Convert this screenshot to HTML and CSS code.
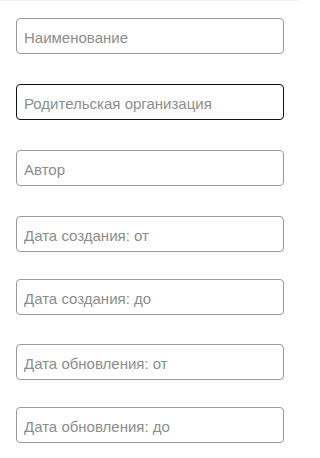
FILE: index.html
```html
<!DOCTYPE html>
<html lang="ru">
<head>
<meta charset="utf-8">
<meta name="viewport" content="width=device-width, initial-scale=1">
<link rel="stylesheet" href="styles.css">
</head>
<body>
<div class="page">
  <div class="topline"></div>
  <form class="filters">
    <input class="field" type="text" placeholder="Наименование">
    <input class="field field--active" type="text" placeholder="Родительская организация">
    <input class="field" type="text" placeholder="Автор">
    <input class="field" type="text" placeholder="Дата создания: от">
    <input class="field field--to" type="text" placeholder="Дата создания: до">
    <input class="field field--from" type="text" placeholder="Дата обновления: от">
    <input class="field field--to" type="text" placeholder="Дата обновления: до">
  </form>
</div>
</body>
</html>
```

FILE: styles.css
```css
html, body {
  margin: 0;
  padding: 0;
  background: #ffffff;
}
body {
  font-family: "Liberation Sans", Arial, sans-serif;
}
.page {
  width: 299px;
}
.topline {
  height: 1px;
  background: #f3f3f3;
}
.filters {
  display: flex;
  flex-direction: column;
  padding: 17px 15px 0 16px;
  margin: 0;
}
.field {
  box-sizing: border-box;
  display: block;
  width: 268px;
  height: 36px;
  margin: 30px 0 0 0;
  padding: 3px 7px 0 7px;
  border: 1px solid #9a9a9a;
  border-radius: 4px;
  background: #ffffff;
  font-family: inherit;
  font-size: 15px;
  color: #222222;
  outline: none;
}
.field:first-child {
  margin-top: 0;
}
.field--active {
  border-color: #111111;
}
.field--to {
  margin-top: 27px;
}
.field--from {
  margin-top: 29px;
}
.field::placeholder {
  color: #8c8c8c;
  opacity: 1;
}
```
